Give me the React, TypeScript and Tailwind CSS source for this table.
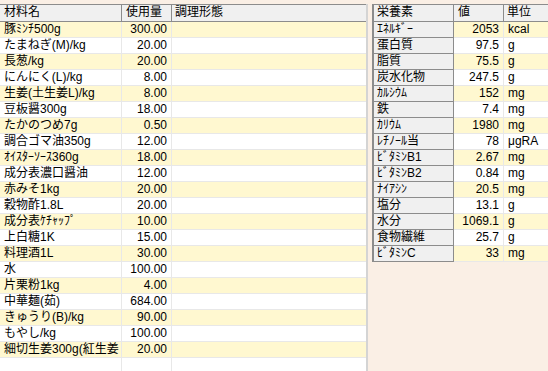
import React from 'react';

const ingredients: Array<[string, string]> = [
  ['豚ﾐﾝﾁ500g', '300.00'],
  ['たまねぎ(M)/kg', '20.00'],
  ['長葱/kg', '20.00'],
  ['にんにく(L)/kg', '8.00'],
  ['生姜(土生姜L)/kg', '8.00'],
  ['豆板醤300g', '18.00'],
  ['たかのつめ7g', '0.50'],
  ['調合ゴマ油350g', '12.00'],
  ['ｵｲｽﾀｰｿｰｽ360g', '18.00'],
  ['成分表濃口醤油', '12.00'],
  ['赤みそ1kg', '20.00'],
  ['穀物酢1.8L', '20.00'],
  ['成分表ｹﾁｬｯﾌﾟ', '10.00'],
  ['上白糖1K', '15.00'],
  ['料理酒1L', '30.00'],
  ['水', '100.00'],
  ['片栗粉1kg', '4.00'],
  ['中華麺(茹)', '684.00'],
  ['きゅうり(B)/kg', '90.00'],
  ['もやし/kg', '100.00'],
  ['細切生姜300g(紅生姜', '20.00'],
  ['', ''],
  ['', ''],
];

const nutrients: Array<[string, string, string]> = [
  ['ｴﾈﾙｷﾞｰ', '2053', 'kcal'],
  ['蛋白質', '97.5', 'g'],
  ['脂質', '75.5', 'g'],
  ['炭水化物', '247.5', 'g'],
  ['ｶﾙｼｳﾑ', '152', 'mg'],
  ['鉄', '7.4', 'mg'],
  ['ｶﾘｳﾑ', '1980', 'mg'],
  ['ﾚﾁﾉｰﾙ当', '78', 'μgRA'],
  ['ﾋﾞﾀﾐﾝB1', '2.67', 'mg'],
  ['ﾋﾞﾀﾐﾝB2', '0.84', 'mg'],
  ['ﾅｲｱｼﾝ', '20.5', 'mg'],
  ['塩分', '13.1', 'g'],
  ['水分', '1069.1', 'g'],
  ['食物繊維', '25.7', 'g'],
  ['ﾋﾞﾀﾐﾝC', '33', 'mg'],
];

export default function App() {
  return (
    <div
      className="w-[548px] h-[371px] overflow-hidden bg-[#faefe5] text-[12px] leading-[15px] text-black"
      style={{ fontFamily: '"Liberation Sans", "Noto Sans CJK JP", sans-serif' }}
    >
      <div className="flex pt-[4px] gap-[4px]">
        {/* INGREDIENTS */}
        <div className="w-[368px] h-[367px] overflow-hidden bg-white border-r-2 border-[#d4d4d4]">
          <div className="flex h-[18px] bg-[#f0f0f0] border-y border-[#8c8c8c]">
            <div className="w-[122px] pl-[4px] border-r border-[#8c8c8c] whitespace-nowrap">材料名</div>
            <div className="w-[50px] pl-[4px] border-r border-[#8c8c8c] whitespace-nowrap">使用量</div>
            <div className="flex-1 pl-[3px] whitespace-nowrap">調理形態</div>
          </div>
          {ingredients.map(([name, amount], i) => (
            <div
              key={i}
              className={`flex h-[16px] border-b border-[#e8e8e8] ${i % 2 === 0 ? 'bg-[#fff8d0]' : 'bg-white'}`}
            >
              <div className="w-[122px] pl-[4px] border-r border-[#e8e8e8] whitespace-nowrap overflow-hidden">{name}</div>
              <div className="w-[50px] pr-[4px] text-right border-r border-[#e8e8e8] whitespace-nowrap">{amount}</div>
              <div className="flex-1" />
            </div>
          ))}
        </div>

        {/* NUTRIENTS */}
        <div className="w-[176px] self-start bg-white border-l-2 border-[#8c8c8c]">
          <div className="flex h-[18px] bg-[#f0f0f0] border-y border-[#8c8c8c]">
            <div className="w-[80px] pl-[3px] border-r border-[#8c8c8c] whitespace-nowrap">栄養素</div>
            <div className="w-[50px] pl-[4px] border-r border-[#8c8c8c] whitespace-nowrap">値</div>
            <div className="flex-1 pl-[3px] whitespace-nowrap">単位</div>
          </div>
          {nutrients.map(([name, value, unit], i) => (
            <div
              key={name}
              className={`flex h-[16px] border-b ${i % 2 === 0 ? 'bg-[#fff8d0]' : 'bg-white'} border-[#e8e8e8]`}
            >
              <div className="w-[80px] h-[16px] -mb-px pl-[3px] bg-[#f0f0f0] border-r border-b border-[#8c8c8c] whitespace-nowrap">{name}</div>
              <div className="w-[50px] pr-[4px] text-right border-r border-[#e8e8e8] whitespace-nowrap">{value}</div>
              <div className="flex-1 pl-[4px] whitespace-nowrap">{unit}</div>
            </div>
          ))}
        </div>
      </div>
    </div>
  );
}
